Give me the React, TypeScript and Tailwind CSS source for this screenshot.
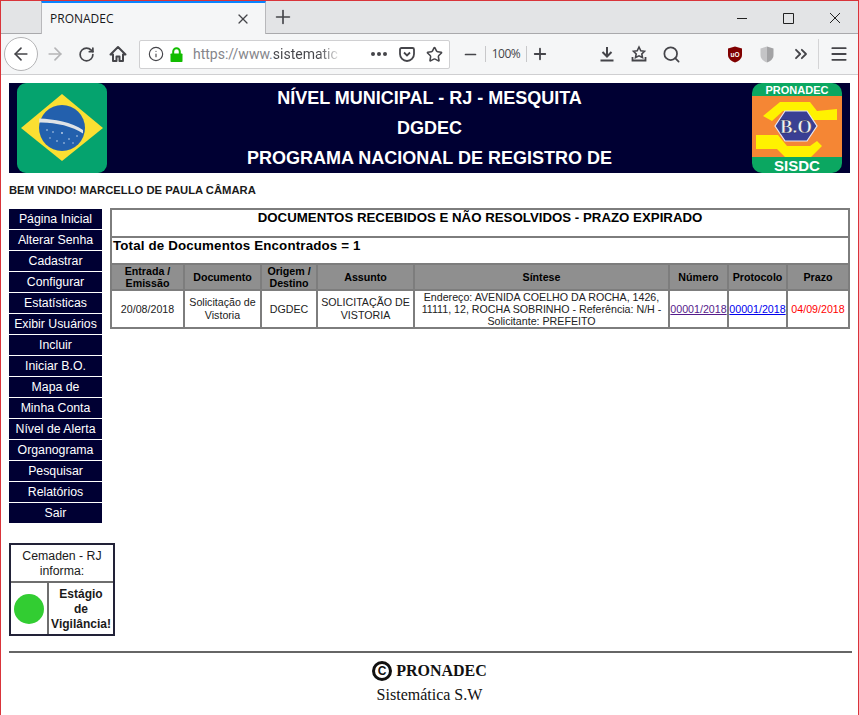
import { Info, Search, Star, ChevronsRight, Menu, Minus, Plus, X, ArrowLeft, ArrowRight, RotateCw } from "lucide-react";

const MENU = [
  "Página Inicial",
  "Alterar Senha",
  "Cadastrar",
  "Configurar",
  "Estatísticas",
  "Exibir Usuários",
  "Incluir",
  "Iniciar B.O.",
  "Mapa de",
  "Minha Conta",
  "Nível de Alerta",
  "Organograma",
  "Pesquisar",
  "Relatórios",
  "Sair",
];

const HEADERS: [string, string][] = [
  ["Entrada / Emissão", "w-[73px]"],
  ["Documento", "w-[77px]"],
  ["Origem / Destino", "w-[56px]"],
  ["Assunto", "w-[97px]"],
  ["Síntese", "w-[255px]"],
  ["Número", "w-[59px]"],
  ["Protocolo", "w-[59px]"],
  ["Prazo", "w-[62px]"],
];

function BrazilFlag() {
  return (
    <svg width="90" height="90" viewBox="0 0 90 90">
      <rect width="90" height="90" rx="9" fill="#05a36e" />
      <polygon points="45,11 86,45 45,78 4,45" fill="#fbdf32" />
      <circle cx="45" cy="45" r="23" fill="#2360ad" />
      <path d="M22.3 35.5 C37 36 55 39 66 47 L66 50.5 C55 43 37 39 22 39.5 Z" fill="#dfe3e6" />
      <g fill="#c9d8ec">
        <circle cx="36" cy="49" r="0.8" />
        <circle cx="45" cy="50" r="0.9" />
        <circle cx="52" cy="56" r="0.8" />
        <circle cx="40" cy="58" r="0.8" />
        <circle cx="60" cy="53" r="0.8" />
        <circle cx="30" cy="47" r="0.8" />
        <circle cx="47" cy="60" r="0.8" />
        <circle cx="33" cy="55" r="0.7" />
        <circle cx="56" cy="60" r="0.7" />
      </g>
    </svg>
  );
}

function ProgramLogo() {
  return (
    <svg width="90" height="90" viewBox="0 0 90 90">
      <rect width="90" height="90" rx="10" fill="#0ba761" />
      <rect y="13" width="90" height="61" fill="#f58634" />
      <polygon points="28,19 58,19 65,28 85,26 85,37 61,37 53,28 31,28 20,38 11,33" fill="#fff200" />
      <polygon points="4,52 26,52 35,63 58,63 65,58 70,63 59,74 33,74 25,66 4,66" fill="#fff200" />
      <polygon points="23,43 33,28 55,28 65,43 55,58 33,58" fill="#3a3f94" stroke="#e8e8f0" strokeWidth="1.2" />
      <text x="44" y="50" textAnchor="middle" fontFamily="'Liberation Serif', serif" fontWeight="700" fontSize="19" fill="#f2f2f2" stroke="#20264f" strokeWidth="0.5">
        B.O
      </text>
      <text x="45" y="11" textAnchor="middle" fontFamily="'Liberation Sans', sans-serif" fontWeight="700" fontSize="11" fill="#fff">
        PRONADEC
      </text>
      <text x="45" y="88" textAnchor="middle" fontFamily="'Liberation Sans', sans-serif" fontWeight="700" fontSize="15" fill="#fff">
        SISDC
      </text>
    </svg>
  );
}

function BrowserChrome() {
  return (
    <div className="font-['Liberation_Sans',sans-serif] text-[#45454a]">
      {/* Tab strip */}
      <div className="flex h-[33px] bg-[#e3e4e6] border-b border-[#a9a9ac]">
        <div className="ml-[40px] w-[225px] h-[33px] bg-[#f5f6f7] border-t-2 border-t-[#0a84ff] border-x border-x-[#b8b8bb] flex items-center pl-[8px] pr-[14px] justify-between">
          <span className="text-[12px] text-[#18181a] font-['Open_Sans',sans-serif]">PRONADEC</span>
          <X size={16} strokeWidth={1.8} />
        </div>
        <Plus size={22} strokeWidth={1.8} className="ml-[6px] mt-[5px]" />
        {/* Window controls */}
        <svg width="110" height="32" viewBox="0 0 110 32" className="ml-auto mr-[11px] text-[#222]">
          <path d="M0 17.5 H10 M46.5 12.5 H56.5 V22.5 H46.5 Z M93 12 L103 22 M103 12 L93 22" fill="none" stroke="currentColor" strokeWidth="1" />
        </svg>
      </div>
      {/* Toolbar */}
      <div className="flex items-center h-[41px] bg-[#f5f6f7] border-b border-[#cfcfd1]">
        <div className="ml-[3px] w-[34px] h-[34px] rounded-full border border-[#b4b4b6] bg-white flex items-center justify-center">
          <ArrowLeft size={20} strokeWidth={2} />
        </div>
        <ArrowRight size={20} strokeWidth={2} className="ml-[7px] text-[#b5b5b7]" />
        <RotateCw size={17} strokeWidth={2.4} className="ml-[13px]" />
        <svg width="18" height="18" viewBox="0 0 18 18" className="ml-[14px]">
          <path d="M9 2 L1.5 9.5 H4 V16 H7.5 V11.5 H10.5 V16 H14 V9.5 H16.5 Z" fill="none" stroke="#45454a" strokeWidth="2" strokeLinejoin="round" />
        </svg>
        {/* URL bar */}
        <div className="ml-[12px] w-[311px] h-[29px] bg-white border border-[#d0d0d2] rounded-[2px] flex items-center">
          <Info size={16} strokeWidth={1.7} className="ml-[8px]" />
          <svg width="13" height="15" viewBox="0 0 13 15" className="ml-[6px]">
            <path d="M3.2 7 V4.5 A3.3 3.3 0 0 1 9.8 4.5 V7" fill="none" stroke="#12bc00" strokeWidth="2" />
            <rect x="0.5" y="6.5" width="12" height="8.5" rx="0.8" fill="#12bc00" />
          </svg>
          <span className="ml-[10px] w-[146px] whitespace-nowrap text-[14px] text-[#85858a] font-['Roboto',sans-serif] leading-[18px]">
            https://www.<span className="bg-[linear-gradient(90deg,#45454a_70%,#e0e0e0_100%)] bg-clip-text text-transparent">sistematic</span>
          </span>
          <span className="ml-[32px] flex gap-[2px]">
            <span className="w-[4px] h-[4px] rounded-full bg-[#45454a]" />
            <span className="w-[4px] h-[4px] rounded-full bg-[#45454a]" />
            <span className="w-[4px] h-[4px] rounded-full bg-[#45454a]" />
          </span>
          <svg width="16" height="15" viewBox="0 0 16 15" className="ml-[12px]">
            <path d="M2.5 1 H13.5 A1.5 1.5 0 0 1 15 2.5 V7 A7 7 0 0 1 1 7 V2.5 A1.5 1.5 0 0 1 2.5 1 Z M5 5.5 L8 8.5 L11 5.5" fill="none" stroke="#45454a" strokeWidth="1.8" />
          </svg>
          <Star size={17} strokeWidth={2.2} className="ml-[11px]" />
        </div>
        {/* Zoom */}
        <Minus size={17} strokeWidth={2.4} className="ml-[12px]" />
        <span className="ml-[6px] w-px h-[16px] bg-[#c8c8ca]" />
        <span className="w-[40px] text-center text-[12px] font-['Open_Sans',sans-serif] tracking-[-0.5px]">100%</span>
        <span className="w-px h-[16px] bg-[#c8c8ca]" />
        <Plus size={18} strokeWidth={2.4} className="ml-[4px]" />
        {/* Actions */}
        <svg width="18" height="18" viewBox="0 0 18 18" className="ml-[49px]">
          <path d="M9 2 V11 M4.5 7 L9 11.5 L13.5 7 M2.5 15.5 H15.5" fill="none" stroke="#45454a" strokeWidth="2" />
        </svg>
        <svg width="18" height="18" viewBox="0 0 18 18" className="ml-[14px]">
          <path d="M9 2 L10.8 5.8 L14.5 6.3 L11.8 9 L12.5 12.5 L9 10.8 L5.5 12.5 L6.2 9 L3.5 6.3 L7.2 5.8 Z" fill="none" stroke="#45454a" strokeWidth="1.6" />
          <path d="M2.5 12 V15.5 H15.5 V12" fill="none" stroke="#45454a" strokeWidth="1.8" />
        </svg>
        <Search size={19} strokeWidth={2.2} className="ml-[14px]" />
        {/* Extensions */}
        <svg width="16" height="17" viewBox="0 0 16 17" className="ml-[46px]">
          <path d="M8 .5 L15 2.5 V9 C15 13 11 15.5 8 16.5 C5 15.5 1 13 1 9 V2.5 Z" fill="#800000" />
          <text x="8" y="10.5" textAnchor="middle" fontSize="6.5" fontWeight="700" fill="#fff" fontFamily="'Liberation Sans', sans-serif">uO</text>
        </svg>
        <svg width="14" height="17" viewBox="0 0 14 17" className="ml-[17px]">
          <path d="M7 .5 L13.5 2.5 V9 C13.5 13 10 15.5 7 16.5 Z" fill="#a3a3a5" />
          <path d="M7 .5 L.5 2.5 V9 C.5 13 4 15.5 7 16.5 Z" fill="#c4c4c6" />
        </svg>
        <ChevronsRight size={20} strokeWidth={2.2} className="ml-[17px]" />
        <span className="ml-[7px] w-px h-[30px] bg-[#d4d4d6]" />
        <Menu size={20} strokeWidth={2.2} className="ml-[10px]" />
      </div>
    </div>
  );
}

function DocumentsTable() {
  const cell = "border-2 border-[#7d7d7d] text-center p-0";
  return (
    <table className="w-[739px] self-start table-fixed border-collapse text-[10.67px] leading-[12px] text-[#222]">
      <colgroup>
        {HEADERS.map(([label, width]) => (
          <col key={label} className={width} />
        ))}
      </colgroup>
      <tbody>
        <tr className="h-[28px]">
          <td colSpan={8} className="border-2 border-[#7d7d7d] align-top text-center font-bold text-[13.28px] leading-[16px] text-black">
            DOCUMENTOS RECEBIDOS E NÃO RESOLVIDOS - PRAZO EXPIRADO
          </td>
        </tr>
        <tr className="h-[27px]">
          <td colSpan={8} className="border-2 border-[#7d7d7d] align-top text-left font-bold text-[13.33px] tracking-[0.15px] leading-[16px] pl-px text-black">
            Total de Documentos Encontrados = 1
          </td>
        </tr>
        <tr className="h-[26px] bg-[#8f8f8f] font-bold text-black">
          {HEADERS.map(([label]) => (
            <td key={label} className={cell}>
              {label}
            </td>
          ))}
        </tr>
        <tr className="h-[38px]">
          <td className={cell}>20/08/2018</td>
          <td className={`${cell} leading-[13px]`}>Solicitação de Vistoria</td>
          <td className={cell}>DGDEC</td>
          <td className={`${cell} leading-[13px]`}>SOLICITAÇÃO DE VISTORIA</td>
          <td className={cell}>
            Endereço: AVENIDA COELHO DA ROCHA, 1426, 11111, 12, ROCHA SOBRINHO - Referência: N/H - Solicitante: PREFEITO
          </td>
          <td className={`${cell} text-[#551a8b] underline`}>00001/2018</td>
          <td className={`${cell} text-[#0000ee] underline`}>00001/2018</td>
          <td className={`${cell} text-[#ff0000]`}>04/09/2018</td>
        </tr>
      </tbody>
    </table>
  );
}

export default function App() {
  return (
    <div className="w-[859px] h-[715px] overflow-hidden border border-[#d9343a] border-b-0 bg-white font-['Liberation_Sans',sans-serif]">
      <BrowserChrome />

      <div className="px-[8px] pt-[8px]">
        {/* Banner */}
        <div className="w-[841px] h-[90px] bg-[#000033] flex justify-between px-[8px]">
          <BrazilFlag />
          <div className="flex flex-col items-center text-white font-bold text-[18px] leading-[30px]">
            <span>NÍVEL MUNICIPAL - RJ - MESQUITA</span>
            <span>DGDEC</span>
            <span>PROGRAMA NACIONAL DE REGISTRO DE</span>
          </div>
          <ProgramLogo />
        </div>

        <p className="mt-[10px] text-[11.25px] leading-[14px] font-bold text-[#1a1a1a]">BEM VINDO! MARCELLO DE PAULA CÂMARA</p>

        <div className="mt-[11px] flex">
          {/* Side menu and Cemaden box */}
          <div className="w-[101px]">
            <nav className="w-[93px] flex flex-col gap-px pt-px">
              {MENU.map((item) => (
                <a key={item} className="h-[20px] bg-[#000033] text-white text-[12.3px] leading-[20px] text-center whitespace-nowrap">
                  {item}
                </a>
              ))}
            </nav>
            <div className="mt-[20px] w-[106px] h-[93px] border-2 border-[#222238] flex flex-col text-[12.3px] leading-[15px] text-[#1a1a1a] text-center">
              <div className="h-[38px] pt-[4px] border-b-2 border-[#6e6e6e]">Cemaden - RJ informa:</div>
              <div className="flex flex-1">
                <div className="w-[38px] shrink-0 border-r-2 border-[#6e6e6e] flex items-center justify-center">
                  <span className="w-[30px] h-[30px] rounded-full bg-[#32cd32]" />
                </div>
                <div className="flex-1 font-bold text-[12px] whitespace-nowrap pt-[4px]">
                  Estágio
                  <br />
                  de
                  <br />
                  Vigilância!
                </div>
              </div>
            </div>
          </div>
          <DocumentsTable />
        </div>

        {/* Footer */}
        <div className="mt-[15px] w-[843px] pr-[2px] border-t-2 border-[#666] text-center font-['Liberation_Serif',serif] text-[#111]">
          <div className="mt-[6px] flex items-center justify-center gap-[4px] h-[24px] font-bold text-[16px]">
            <span className="w-[20px] h-[20px] rounded-full border-[3px] border-[#111] flex items-center justify-center text-[12px] leading-none font-['Liberation_Sans',sans-serif]">C</span>
            PRONADEC
          </div>
          <div className="text-[16px] leading-[24px]">Sistemática S.W</div>
        </div>
      </div>
    </div>
  );
}
